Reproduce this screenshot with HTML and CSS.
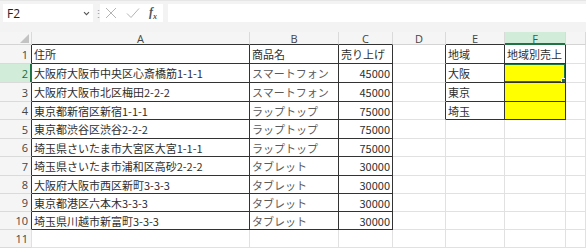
FILE: index.html
```html
<!DOCTYPE html>
<html lang="ja">
<head>
    <meta charset="UTF-8">
    <title>Sheet1</title>
    <link rel="stylesheet" href="styles.css">
</head>
<body>
    <div class="bar">
        <div class="namebox">
            <span>F2</span>
            <svg width="7" height="5" viewBox="0 0 7 5"><path d="M1 1.2 L3.5 3.7 L6 1.2" fill="none" stroke="#555" stroke-width="1.1"/></svg>
        </div>
        <div class="dots">⋮</div>
        <div class="fxbox">
            <svg width="12" height="12" viewBox="0 0 12 12"><path d="M1 1 L11 11 M11 1 L1 11" stroke="#b4b4b4" stroke-width="1"/></svg>
            <svg width="14" height="12" viewBox="0 0 14 12"><path d="M1 6.5 L5 10.5 L13 1.5" fill="none" stroke="#b4b4b4" stroke-width="1"/></svg>
            <span class="fx">f<sub>x</sub></span>
        </div>
        <div class="formula"></div>
    </div>

    <table class="sheet">
        <colgroup>
            <col class="c-h">
            <col class="c-a">
            <col class="c-b">
            <col class="c-c">
            <col class="c-d">
            <col class="c-e">
            <col class="c-f">
            <col class="c-g">
        </colgroup>
        <thead>
            <tr class="hdr">
                <th class="corner"><span class="tri"></span></th>
                <th class="dk">A</th>
                <th class="dk">B</th>
                <th class="dk">C</th>
                <th>D</th>
                <th class="dk">E</th>
                <th class="sel">F</th>
                <th></th>
            </tr>
        </thead>
        <tbody>
            <tr class="r19">
                <td class="rh dk-r">1</td>
                <td class="k">住所</td>
                <td class="k">商品名</td>
                <td class="k">売り上げ</td>
                <td class="dk-r"></td>
                <td class="k">地域</td>
                <td class="k">地域別売上</td>
                <td></td>
            </tr>
            <tr class="r19">
                <td class="rh rh-sel">2</td>
                <td class="k">大阪府大阪市中央区心斎橋筋1-1-1</td>
                <td class="k kana">スマートフォン</td>
                <td class="k num">45000</td>
                <td class="dk-r"></td>
                <td class="k">大阪</td>
                <td class="k yel active"><span class="handle"></span></td>
                <td></td>
            </tr>
            <tr class="r19">
                <td class="rh dk-r">3</td>
                <td class="k">大阪府大阪市北区梅田2-2-2</td>
                <td class="k kana">スマートフォン</td>
                <td class="k num">45000</td>
                <td class="dk-r"></td>
                <td class="k">東京</td>
                <td class="k yel"></td>
                <td></td>
            </tr>
            <tr class="r18">
                <td class="rh dk-r">4</td>
                <td class="k">東京都新宿区新宿1-1-1</td>
                <td class="k kana">ラップトップ</td>
                <td class="k num">75000</td>
                <td class="dk-r"></td>
                <td class="k">埼玉</td>
                <td class="k yel"></td>
                <td></td>
            </tr>
            <tr class="r19">
                <td class="rh dk-r">5</td>
                <td class="k">東京都渋谷区渋谷2-2-2</td>
                <td class="k kana">ラップトップ</td>
                <td class="k num">75000</td>
                <td></td>
                <td></td>
                <td></td>
                <td></td>
            </tr>
            <tr class="r18">
                <td class="rh dk-r">6</td>
                <td class="k">埼玉県さいたま市大宮区大宮1-1-1</td>
                <td class="k kana">ラップトップ</td>
                <td class="k num">75000</td>
                <td></td>
                <td></td>
                <td></td>
                <td></td>
            </tr>
            <tr class="r19">
                <td class="rh dk-r">7</td>
                <td class="k">埼玉県さいたま市浦和区高砂2-2-2</td>
                <td class="k kana">タブレット</td>
                <td class="k num">30000</td>
                <td></td>
                <td></td>
                <td></td>
                <td></td>
            </tr>
            <tr class="r18">
                <td class="rh dk-r">8</td>
                <td class="k">大阪府大阪市西区新町3-3-3</td>
                <td class="k kana">タブレット</td>
                <td class="k num">30000</td>
                <td></td>
                <td></td>
                <td></td>
                <td></td>
            </tr>
            <tr class="r18">
                <td class="rh dk-r">9</td>
                <td class="k">東京都港区六本木3-3-3</td>
                <td class="k kana">タブレット</td>
                <td class="k num">30000</td>
                <td></td>
                <td></td>
                <td></td>
                <td></td>
            </tr>
            <tr class="r18">
                <td class="rh dk-r">10</td>
                <td class="k">埼玉県川越市新富町3-3-3</td>
                <td class="k kana">タブレット</td>
                <td class="k num">30000</td>
                <td></td>
                <td></td>
                <td></td>
                <td></td>
            </tr>
            <tr class="r18">
                <td class="rh">11</td>
                <td></td>
                <td></td>
                <td></td>
                <td></td>
                <td></td>
                <td></td>
                <td></td>
            </tr>
        </tbody>
    </table>
</body>
</html>
```

FILE: styles.css
```css
body {
    margin: 0;
    width: 586px;
    height: 250px;
    overflow: hidden;
    background: #fff;
    font-family: "Noto Sans CJK JP", sans-serif;
}

/* formula bar */
.bar {
    display: flex;
    align-items: flex-start;
    height: 32px;
    padding: 3px 0 0 3px;
    box-sizing: border-box;
    background: #f3f3f3;
    border-top: 1px solid #e6e6e6;
}
.namebox {
    width: 90px;
    height: 18px;
    padding: 0 3px 0 4px;
    box-sizing: border-box;
    background: #fff;
    display: flex;
    align-items: center;
    justify-content: space-between;
    font: 12px "Open Sans", sans-serif;
    color: #222;
}
.dots {
    width: 7px;
    height: 18px;
    line-height: 18px;
    text-align: center;
    font-size: 11px;
    color: #9a9a9a;
}
.fxbox {
    width: 63px;
    height: 18px;
    background: #fff;
    display: flex;
    align-items: center;
    gap: 9px;
    padding-left: 5px;
    box-sizing: border-box;
}
.fx {
    font: italic bold 12px "Liberation Serif", serif;
    color: #555;
}
.fx sub {
    font-size: 8px;
}
.formula {
    flex: 1;
    height: 18px;
    margin-left: 5px;
    background: #fff;
}

/* grid */
.sheet {
    table-layout: fixed;
    width: 586px;
    border-collapse: separate;
    border-spacing: 0;
    font-size: 11px;
    color: #2e2e2e;
}
.c-h { width: 32px; }
.c-a { width: 218px; }
.c-b { width: 89px; }
.c-c { width: 54px; }
.c-d { width: 53px; }
.c-e { width: 59px; }
.c-f { width: 61px; }
.c-g { width: 20px; }

.sheet th,
.sheet td {
    box-sizing: border-box;
    padding: 0 2px;
    border-right: 1px solid #e1e1e1;
    border-bottom: 1px solid #e1e1e1;
    white-space: nowrap;
    overflow: hidden;
    vertical-align: middle;
}
.hdr {
    height: 13px;
}
.sheet .hdr th {
    padding: 0;
    overflow: visible;
    background: #f5f5f5;
    font: normal 11px "Open Sans", sans-serif;
    line-height: 11px;
    color: #444;
    text-align: center;
    border-bottom-color: #d4d4d4;
    border-right-color: #dadada;
}
.sheet .hdr th.dk {
    border-bottom-color: #333;
}
.sheet .hdr th.sel {
    background: #d2ecda;
    color: #1e6b3f;
    border-bottom-color: #217346;
    box-shadow: inset 0 -1px 0 #217346;
}
.corner {
    position: relative;
}
.tri {
    position: absolute;
    right: 2px;
    bottom: 1px;
    width: 0;
    height: 0;
    border-left: 9px solid transparent;
    border-bottom: 9px solid #c3c3c3;
}

.r19 { height: 19px; }
.r18 { height: 18px; }

.sheet td.rh {
    background: #f5f5f5;
    font: 11px "Open Sans", sans-serif;
    color: #444;
    text-align: right;
    padding-right: 3px;
    border-bottom-color: #dadada;
}
.sheet td.rh-sel {
    background: #d2ecda;
    color: #1e6b3f;
    border-right-color: #217346;
    box-shadow: inset -1px 0 0 #217346;
}
.sheet td.dk-r {
    border-right-color: #333;
}
.sheet td.k {
    border-right-color: #333;
    border-bottom-color: #333;
}
.kana {
    color: #5a5a5a;
}
.num {
    text-align: right;
}
.yel {
    background: #ffff00;
}
.active {
    position: relative;
}
.active::after {
    content: "";
    position: absolute;
    left: -2px;
    top: -1px;
    right: -1px;
    bottom: -1px;
    border: 2px solid #217346;
}
.handle {
    position: absolute;
    right: -3px;
    bottom: -3px;
    width: 5px;
    height: 5px;
    background: #217346;
    border: 1px solid #fff;
    z-index: 1;
}
```
